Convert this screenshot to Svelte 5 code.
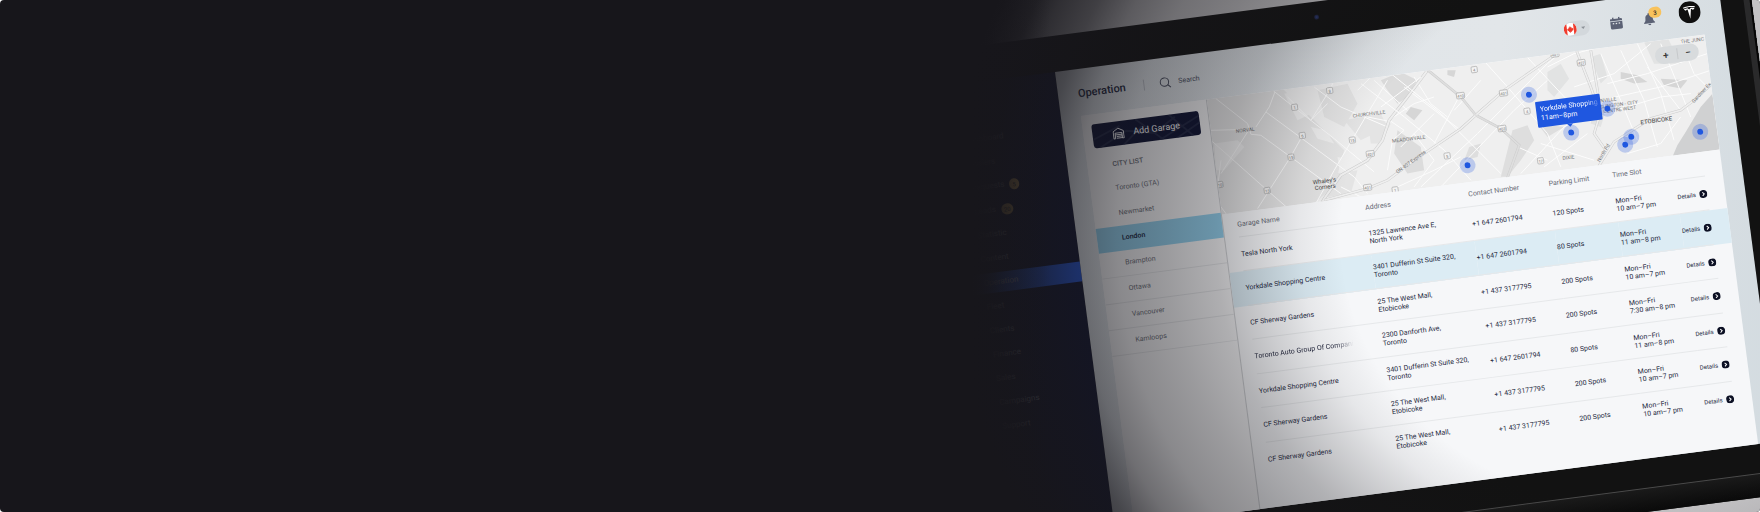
<script>
  const menu = [
    { name: 'Dashboard' },
    { name: 'Dealers' },
    { name: 'Requests', badge: 5 },
    { name: 'Leads', badge: 20 },
    { name: 'Statistic' },
    { name: 'Content' },
    { name: 'Operation', active: true },
    { name: 'Fleet' },
    { name: 'Clients' },
    { name: 'Finance' },
    { name: 'Sales' },
    { name: 'Campaigns' },
    { name: 'Support' }
  ];

  const cities = ['Toronto (GTA)', 'Newmarket', 'London', 'Brampton', 'Ottawa', 'Vancouver', 'Kamloops'];

  const yorkdale = { name: 'Yorkdale Shopping Centre', street: '3401 Dufferin St Suite 320,', town: 'Toronto', phone: '+1 647 2601794', spots: 80, hours: '11 am–8 pm' };
  const sherway = { name: 'CF Sherway Gardens', street: '25 The West Mall,', town: 'Etobicoke', phone: '+1 437 3177795', spots: 200, hours: '10 am–7 pm' };
  const garages = [
    { name: 'Tesla North York', street: '1325 Lawrence Ave E,', town: 'North York', phone: '+1 647 2601794', spots: 120, hours: '10 am–7 pm' },
    { ...yorkdale, selected: true },
    sherway,
    { name: 'Toronto Auto Group Of Compani', fade: true, street: '2300 Danforth Ave,', town: 'Toronto', phone: '+1 437 3177795', spots: 200, hours: '7:30 am–8 pm' },
    yorkdale,
    sherway,
    sherway
  ];

  const pins = [[320, 37], [250, 99], [357, 80], [396, 61], [416, 92], [409, 99], [485, 96]];

  const shields = [
    [376, 12, '427'], [269, 5, '4'], [252, 29, '410'], [295, 32, '401'], [316, 53, '4'],
    [289, 67, '403'], [231, 87, '5'], [155, 75, '407'], [148, 108, '401'], [175, 114, '1'],
    [323, 104, '17'], [351, 0, '401'], [123, 7, '8'], [86, 19, '1'], [90, 48, '6'],
    [139, 59, '15'], [76, 68, '15'], [48, 98, '13'], [2, 86, '10']
  ];
</script>

<section class="banner">
  <div class="stage">
    <div class="device">
      <span class="camera"></span>
      <div class="screen">
        <nav class="menu" aria-label="Main">
          {#each menu as item}
            <a href="#top" class:active={item.active}>
              {item.name}{#if item.badge}<span class="count">{item.badge}</span>{/if}
            </a>
          {/each}
        </nav>

        <div class="app">
          <header>
            <h1>Operation</h1>
            <span class="rule"></span>
            <label class="search">
              <svg viewBox="0 0 12 12" aria-hidden="true"><circle cx="5.2" cy="5.2" r="4.2" /><path d="M8.3 8.3 11 11" /></svg>
              <input type="text" placeholder="Search" aria-label="Search" />
            </label>
            <div class="tools">
              <button class="lang" aria-label="Language">
                <svg class="flag" viewBox="0 0 14 14">
                  <defs><clipPath id="disc"><circle cx="7" cy="7" r="7" /></clipPath></defs>
                  <g clip-path="url(#disc)">
                    <rect width="14" height="14" fill="#fff" />
                    <rect width="3.4" height="14" fill="#f03b2d" />
                    <rect x="10.6" width="3.4" height="14" fill="#f03b2d" />
                    <path fill="#f03b2d" d="M7 3.4 7.8 5l.8-.3-.2 1.5.9-.7.3.7h.8l-.4 1 .4.4-1.9 1.6.1.7L7.3 9.700V11h-.6V9.700l-1.300.2.1-.7-1.900-1.600.4-.4-.4-1h.8l.3-.7.9.7-.2-1.500.8.3z" />
                  </g>
                </svg>
                <svg class="caret" viewBox="0 0 6 4"><path d="M.5.5h5L3 3.500z" fill="#8d9298" /></svg>
              </button>
              <button class="icon" aria-label="Calendar">
                <svg viewBox="0 0 14 14">
                  <path fill="#5b6174" d="M3 .5h1.500v1.500h5V.5H11v1.500h1.500c.6 0 1 .4 1 1v1.300H.5V3c0-.6.4-1 1-1H3zM.5 5h13v6.500c0 1-.7 1.700-1.700 1.700H2.200c-1 0-1.700-.7-1.700-1.700z" />
                  <path fill="#e2e6e9" d="M3 6.500h1.600v1.300H3zM6.200 6.500h1.600v1.300H6.200zM9.400 6.500H11v1.300H9.400z" />
                </svg>
              </button>
              <button class="icon bell" aria-label="Notifications">
                <svg viewBox="0 0 12 13">
                  <path fill="#5b6174" d="M6 .5c.6 0 1 .4 1 1v.4c1.700.4 2.700 1.900 2.700 3.800 0 2.400.6 3.200 1.800 4.300v.7H.5V10c1.200-1.100 1.800-1.900 1.800-4.300C2.300 3.800 3.300 2.300 5 1.900v-.4c0-.6.4-1 1-1zM4.500 11.400h3c0 .8-.7 1.400-1.500 1.400s-1.500-.6-1.500-1.400z" />
                </svg>
                <span>3</span>
              </button>
              <button class="avatar" aria-label="Account">
                <svg viewBox="0 0 22 22">
                  <circle cx="11" cy="11" r="11" fill="#0f0f0f" />
                  <path fill="#fff" d="M5 5.800C8.800 4.600 13.200 4.600 17 5.800l-.4.9C13 5.500 9 5.500 5.400 6.700zM5.700 7.400c1.300-.5 2.500-.7 3.700-.7l1.600 1.500 1.600-1.500c1.200 0 2.400.2 3.700.7-.4 1-1.100 1.500-2 1.600-.2-.6-.6-.9-1.600-.9L11 17.500 9.300 8.100c-1 0-1.400.3-1.600.9-.9-.1-1.600-.6-2-1.600z" />
                </svg>
              </button>
            </div>
          </header>

          <main>
            <aside>
              <button class="add">
                <svg class="streets" viewBox="0 0 108 25" preserveAspectRatio="none" aria-hidden="true">
                  <path d="M0 16 28 5M6 25 34 11 62 17 84 3M44 0 70 25M78 0 100 25M66 25 108 5M50 8 30 25M84 25 108 12" />
                </svg>
                <svg class="garage" viewBox="0 0 14 14" aria-hidden="true">
                  <path d="M1 13V4.500L7 1l6 3.500V13h-2V6.500H3V13zM3 8.500h8M4.500 10.500H11M4.500 12.500H11" />
                </svg>
                <span>Add Garage</span>
              </button>
              <h2>CITY LIST</h2>
              <ul>
                {#each cities as city, i}
                  <li class:lined={i > 2}><a href="#top" class:current={city === 'London'}>{city}</a></li>
                {/each}
              </ul>
            </aside>

            <div class="content">
              <div class="map">
                <svg class="streetmap" viewBox="0 0 502 116" aria-hidden="true">
                  <rect width="502" height="116" fill="#efefef" />
                  <g transform="translate(-146 -47) rotate(7.45) translate(145 -11.500) scale(.333)">
                    <g fill="#e4e4e4">
                      <path d="M-20 60 220 60 340 180 430 270 400 380 300 460 -20 480z" />
                      <path d="M350 90 440 70 470 130 430 200 370 170zM430 180 540 160 560 200 480 240z" />
                      <path d="M540 60 600 35 650 60 620 110 590 130 560 90zM590 210 660 260 670 330 620 340 580 280z" fill="#dcdcdc" />
                      <path d="M500 180 570 190 540 250 510 250zM400 340 470 330 450 400 380 410z" />
                      <path d="M630 140 665 150 640 180 615 160zM740 30 765 30 760 50 740 44z" fill="#d6d6d6" />
                    </g>
                    <path fill="#efefef" d="M250 100 300 90 330 160 290 180zM40 250 110 240 130 260 70 330 45 330zM410 290 470 300 420 350zM330 200 375 210 400 250 350 235z" />
                    <g fill="none" stroke="#fbfbfb" stroke-width="3">
                      <path d="M45 115 140 190 150 222 180 225 420 400M140 215 60 340M30 240 200 391 262 445M60 300 45 420 90 480" />
                      <path d="M218 92 281 142 400 235 520 335M222 95 205 140 165 200M195 155 305 236 460 350 500 400M170 445 269 290 305 226M330 180 386 90 400 60" />
                      <path d="M260 110 330 180 380 130M340 80 420 140 560 200M345 430 400 330 453 240 500 160 560 60M470 90 520 40M500 170 560 182 640 130 700 110" />
                      <path d="M566 180 610 210 575 240 560 330M610 80 780 210M640 50 690 130 740 170M590 380 700 330 780 290M640 380 700 300 640 220" />
                      <path d="M700 160 600 260M780 100 700 250M420 380 540 440M520 60 620 150M30 210 110 208" />
                    </g>
                    <g fill="none" stroke="#cdcdcd" stroke-width="9"><path d="M345 460 370 415 420 345 500 300 545 240 565 180 620 110 680 30" /></g>
                    <g fill="none" stroke="#eeeeee" stroke-width="6"><path d="M345 460 370 415 420 345 500 300 545 240 565 180 620 110 680 30" /></g>
                  </g>
                  <g transform="translate(-146 -47) rotate(7.45) translate(305 -71.500) scale(.333)">
                    <g fill="#e2e3e3">
                      <path d="M560 215 600 190 625 235 580 290 560 270zM690 170 720 160 740 230 720 250z" />
                      <path d="M780 215 830 225 860 245 820 250 780 235zM900 235 980 240 960 265 910 255z" fill="#d6d6d6" />
                      <path d="M850 125 920 110 960 190 880 190z" />
                      <path d="M455 390 500 375 520 420 480 480 440 530 420 530zM325 440 360 430 350 470 310 480zM530 370 610 380 560 410z" fill="#dedede" />
                      <path d="M935 470 950 435 975 395 1020 320 1060 275 1100 460z" fill="#d0d1d2" />
                      <path d="M700 300 735 330 720 380 690 370z" />
                    </g>
                    <g fill="none" stroke="#fcfcfc" stroke-width="3">
                      <path d="M0 250 130 350 250 450 330 540M90 220 240 340 360 460 420 520M350 160 440 260 560 400 600 500M480 150 620 300M230 200 340 130" />
                      <path d="M180 560 350 400 560 190 620 140M240 560 460 330 560 240M480 520 610 380 700 330M550 500 680 400M60 320 180 230M540 430 700 480" />
                      <path d="M740 250 860 220 1040 160M720 300 900 260 1050 210M730 340 900 290 990 280M720 160 780 300 830 420M780 150 850 300 890 440M830 130 900 280 940 420M900 130 950 250 990 350M960 120 1000 220 1040 260" />
                      <path d="M640 260 760 220 870 130M630 330 700 300 740 320M560 200 640 160 760 130M470 440 560 480M280 330 360 240M800 460 900 430 960 350M860 200 960 330" />
                    </g>
                    <g fill="none" stroke="#cdcdcd" stroke-width="8">
                      <path d="M-110 600 20 565 80 540 160 480 300 385 350 340 430 270 595 155" />
                      <path d="M195 205 300 290 345 345 420 385 475 435 430 560M645 145 690 260 718 340 700 400 735 450M690 150 712 280" />
                      <path d="M700 520 760 425 870 355 960 330 1000 300 1060 245" />
                    </g>
                    <g fill="none" stroke="#efefef" stroke-width="5">
                      <path d="M-110 600 20 565 80 540 160 480 300 385 350 340 430 270 595 155" />
                      <path d="M645 145 690 260 718 340 700 400 735 450M690 150 712 280" />
                      <path d="M700 520 760 425 870 355 960 330 1000 300 1060 245" />
                    </g>
                    <path fill="none" stroke="#dedede" stroke-width="5" d="M195 205 300 290 345 345 420 385 475 435 430 560" />
                  </g>
                  {#each shields as [x, y, no]}
                    <rect x={x - (no.length > 2 ? 4 : 3)} y={y - 3} width={no.length > 2 ? 8 : 6} height="6" rx="1" fill="#f3f3f3" stroke="#a2a2a2" stroke-width=".6" />
                    <text class="no" {x} y={y + 2}>{no}</text>
                  {/each}
                  <g class="place">
                    <text x="34" y="37">NORVAL</text>
                    <text x="159" y="37">CHURCHVILLE</text>
                    <text x="195" y="67">MEADOWVALE</text>
                    <text x="351" y="106">DIXIE</text>
                    <text x="398" y="54">NVILLE</text>
                    <text x="407" y="60">ISLINGTON - CITY</text>
                    <text x="408" y="65">CENTRE WEST</text>
                    <text x="489" y="6">THE JUNC</text>
                    <text x="194" y="90" transform="rotate(-29 194 88)">ON 407 Express</text>
                    <text x="491" y="59" transform="rotate(-40 491 57)">Gardiner Ex</text>
                    <text x="386" y="106" transform="rotate(-52 386 104)">North Rd</text>
                  </g>
                  <text class="town" x="443" y="81">ETOBICOKE</text>
                  <g class="village"><text x="106" y="98">Whaley’s</text><text x="106" y="104">Corners</text></g>
                </svg>
                {#each pins as [x, y]}
                  <span class="pin" style="left: {x}px; top: {y}px"></span>
                {/each}
                <div class="tip"><b>Yorkdale Shopping</b><span>11am–8pm</span></div>
                <div class="zoom"><button aria-label="Zoom in">+</button><button aria-label="Zoom out">−</button></div>
              </div>

              <div class="sheet">
                <table>
                  <colgroup><col class="c1" /><col class="c2" /><col class="c3" /><col class="c4" /><col class="c5" /><col class="c6" /></colgroup>
                  <thead>
                    <tr><th>Garage Name</th><th>Address</th><th>Contact Number</th><th>Parking Limit</th><th>Time Slot</th><th></th></tr>
                  </thead>
                  <tbody>
                    {#each garages as g}
                      <tr class:selected={g.selected}>
                        <td><span class:fade={g.fade}>{g.name}</span></td>
                        <td>{g.street}<br />{g.town}</td>
                        <td>{g.phone}</td>
                        <td>{g.spots} Spots</td>
                        <td>Mon–Fri<br />{g.hours}</td>
                        <td>
                          <a class="details" href="#top">Details
                            <svg viewBox="0 0 8 8" aria-hidden="true"><circle cx="4" cy="4" r="4" fill="#0c1024" /><path d="M3.200 2.200 5 4 3.200 5.800" fill="none" stroke="#fff" stroke-width="1" /></svg>
                          </a>
                        </td>
                      </tr>
                    {/each}
                  </tbody>
                </table>
              </div>
            </div>
          </main>
        </div>
      </div>
    </div>
    <div class="shade"></div>
  </div>
</section>

<style>
  :global(body) { background: #fff; }
  .banner {
    display: flex;
    justify-content: flex-end;
    min-height: 512px;
    overflow: hidden;
    border-radius: 4px;
    background: #17161b;
    font-family: Roboto, "Liberation Sans", sans-serif;
  }
  .stage {
    position: relative;
    flex: 0 0 800px;
    overflow: hidden;
    background: #c3c2c4;
    contain: size;
  }
  .shade {
    position: absolute;
    inset: 0;
    pointer-events: none;
    background:
      linear-gradient(90deg, #17161b 12px, rgba(23, 22, 27, .5) 40px, rgba(23, 22, 27, 0) 90px),
      radial-gradient(
        ellipse 700px 640px at 675px 235px,
        rgba(23, 22, 27, 0) 42%,
        rgba(23, 22, 27, .07) 48%,
        rgba(23, 22, 27, .19) 54%,
        rgba(23, 22, 27, .31) 60%,
        rgba(23, 22, 27, .4) 67%,
        rgba(23, 22, 27, .48) 74%,
        rgba(23, 22, 27, .6) 80%,
        rgba(23, 22, 27, .76) 85%,
        rgba(23, 22, 27, .86) 90%,
        rgba(23, 22, 27, .94) 93%,
        #17161b 98%
      );
  }

  .device {
    position: relative;
    box-sizing: border-box;
    width: 882px;
    margin: 36px 0 0 -87px;
    padding: 36px 32px 53px;
    background: #121212;
    box-shadow: inset -2px 0 #060606, inset -8px 0 #2a2a2b;
    transform: rotate(-7.45deg);
    transform-origin: 182px 36px;
  }
  .device::after {
    content: "";
    position: absolute;
    left: 0;
    right: 0;
    bottom: 0;
    height: 23px;
    border-top: 1px solid #4b4b4b;
    background: linear-gradient(#1a1a1a, #0a0a0a);
  }
  .camera {
    position: absolute;
    left: 446px;
    top: 13px;
    width: 5px;
    height: 5px;
    border-radius: 50%;
    background: radial-gradient(#2b3a76, #14141c);
  }
  .screen { display: flex; min-height: 460px; }
  button { padding: 0; border: 0; background: none; font: inherit; color: inherit; }
  a { color: inherit; text-decoration: none; }
  svg { display: block; }

  .menu {
    display: flex;
    flex: 0 0 150px;
    flex-direction: column;
    gap: 4px;
    box-sizing: border-box;
    padding-top: 47px;
    background: #10142f;
    color: #9da0ac;
    font-size: 8px;
    line-height: 20px;
  }
  .menu a { display: flex; align-items: center; gap: 5px; padding-left: 52px; }
  .menu .active { background: #2456d8; color: #d0d8ee; }
  .count { padding: 0 3px; border-radius: 6px; background: #ffca66; color: #222; font-size: 6px; line-height: 11px; }

  .app { flex: 1; display: flex; flex-direction: column; background: linear-gradient(100deg, #dfe4e8, #e2e6e9 60%, #d3dbe0); }
  header { display: flex; align-items: center; height: 47px; padding: 2px 21px 0 20px; box-sizing: border-box; color: #20243a; }
  h1 { margin: 0; font-size: 11px; font-weight: 500; }
  .rule { width: 1px; height: 11px; margin: 0 15px 0 18px; background: #b9bec4; }
  .search { display: flex; align-items: center; gap: 7px; }
  .search svg { width: 12px; height: 12px; fill: none; stroke: #44485a; stroke-width: 1; }
  input { width: 80px; padding: 0; border: 0; background: none; font: 7px Roboto, sans-serif; }
  input::placeholder { color: #44485a; opacity: 1; }
  .tools { display: flex; align-items: center; gap: 20px; margin-left: auto; }
  .lang { display: flex; align-items: center; gap: 4px; height: 15px; width: 26px; border-radius: 8px; background: #d3d8dc; }
  .flag { width: 13px; height: 13px; }
  .caret { width: 5px; }
  .icon { position: relative; width: 14px; }
  .icon svg { width: 14px; height: 13px; }
  .bell svg { width: 12px; height: 13px; }
  .bell span { position: absolute; left: 6px; top: -5px; width: 13px; border-radius: 6px; background: #f8c25c; color: #222; font-size: 6px; font-weight: 500; line-height: 11px; }
  .avatar { margin: -4px 0 0 2px; }
  .avatar svg { width: 22px; height: 22px; }

  main { display: flex; flex: 1; margin: 0 20px; background: #f6f7f9; }
  aside { flex: 0 0 125px; border-right: 1px solid #cacccf; color: #666972; background: #f3f3f4; }
  .add {
    position: relative;
    display: flex;
    align-items: center;
    gap: 9px;
    width: 108px;
    height: 24px;
    margin: 10px 9px 14px;
    padding-left: 20px;
    border-radius: 3px;
    background: #0c1130;
    color: #fff;
    font-size: 9px;
    overflow: hidden;
  }
  .streets { position: absolute; inset: 0; width: 100%; height: 100%; fill: none; stroke: #1d2340; stroke-width: 2; }
  .garage { position: relative; width: 12px; height: 12px; fill: none; stroke: #fff; stroke-width: 1; }
  .add span { position: relative; }
  h2 { margin: 0 0 8px 25px; font-size: 7px; font-weight: 500; line-height: 8px; }
  ul { margin: 0; padding: 0; list-style: none; }
  li a { display: block; padding-left: 25px; font-size: 7px; line-height: 25px; }
  .current { background: #8fcce8; color: #101533; font-weight: 500; }
  .lined { border-bottom: 1px solid #dfe0e2; }

  .content { flex: 1; min-width: 0; }
  .map { position: relative; height: 116px; overflow: hidden; }
  .streetmap { width: 502px; height: 116px; }
  .no { fill: #777; font-size: 4px; text-anchor: middle; }
  .place { fill: #757575; font-size: 5px; text-anchor: middle; }
  .town { fill: #5c5c5c; font-size: 6px; font-weight: 500; text-anchor: middle; }
  .village { fill: #444; font-size: 6px; text-anchor: middle; }
  .pin {
    position: absolute;
    width: 6px;
    height: 6px;
    margin: -8px;
    border: 5px solid rgba(36, 86, 224, .25);
    border-radius: 50%;
    background: #1f57e0;
    background-clip: padding-box;
  }
  .tip {
    position: absolute;
    left: 325px;
    top: 45px;
    box-sizing: border-box;
    width: 65px;
    height: 26px;
    padding: 4px 0 4px 4px;
    border-radius: 1px;
    background: #1f57e0;
    color: #fff;
    font-size: 7px;
    line-height: 9px;
  }
  .tip b {
    display: block;
    font-weight: 400;
    white-space: nowrap;
    mask-image: linear-gradient(90deg, #000 75%, transparent 102%);
  }
  .tip::after {
    content: "";
    position: absolute;
    left: 29px;
    top: 26px;
    border: 3px solid transparent;
    border-top-color: #1f57e0;
  }
  .zoom {
    position: absolute;
    right: 8px;
    top: 7px;
    display: flex;
    width: 44px;
    height: 17px;
    border-radius: 9px;
    background: #d8dbdd;
    color: #333;
    font-size: 10px;
    font-weight: 500;
    line-height: 17px;
  }
  .zoom button { flex: 1; }
  .zoom button + button { border-left: 1px solid #c6c9cb; margin: 3px 0; line-height: 11px; }

  .sheet { padding: 0 18px 0 14px; color: #23273d; }
  table { width: 100%; table-layout: fixed; border-collapse: collapse; font-size: 7px; line-height: 8px; }
  .c1 { width: 129px; }
  .c2 { width: 104px; }
  .c3 { width: 81px; }
  .c4 { width: 64px; }
  .c5 { width: 62px; }
  th, td { padding: 0; border-bottom: 1px solid #e6e8ea; text-align: left; white-space: nowrap; }
  th { height: 24px; color: #666a75; font-weight: 400; }
  td { height: 34px; vertical-align: middle; }
  tr:nth-child(odd) td { height: 33px; }
  tbody tr:last-child td { border-bottom: 0; }
  .selected { background: #dcecf4; box-shadow: -14px 0 #dcecf4, 18px 0 #dcecf4; }
  .fade { display: inline-block; mask-image: linear-gradient(90deg, #000 82%, transparent); }
  .details { display: flex; align-items: center; justify-content: space-between; font-size: 6px; }
  .details svg { width: 8px; height: 8px; }
</style>
